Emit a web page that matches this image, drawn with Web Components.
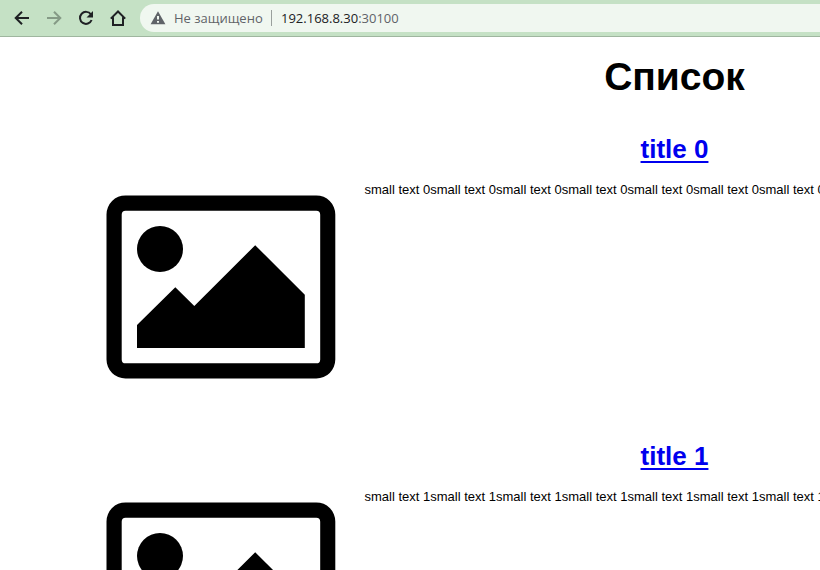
<!DOCTYPE html>
<html lang="ru">
<head>
<meta charset="utf-8">
<title>Список</title>
<style>
html, body { margin: 0; height: 570px; overflow: hidden; background: #fff; }
</style>
</head>
<body>
<app-window></app-window>
<script>
class BrowserBar extends HTMLElement {
  constructor() {
    super();
    this.attachShadow({ mode: 'open' }).innerHTML = `
<style>
:host { display: flex; box-sizing: border-box; height: 37px; flex: none; background: #c5e1c5; border-bottom: 1px solid #9fb69f; padding-top: 4px; align-items: flex-start; }
svg { display: block; flex: none; }
.nav { display: flex; padding-left: 14px; gap: 16px; width: 126px; height: 28px; align-items: center; box-sizing: content-box; }
.nav svg { width: 16px; height: 16px; fill: none; stroke: #1f2124; stroke-width: 2; }
.nav svg.off { stroke: #859a86; }
.url { display: flex; flex: 1; height: 28px; align-items: center; background: #f0f7f0; border-radius: 14px 0 0 14px; padding-left: 10px; box-sizing: border-box; font: 13px/28px "Open Sans", "Noto Sans", sans-serif; color: #5f6368; white-space: nowrap; }
.warn { margin-right: 8px; }
.state { width: 97px; }
.sep { width: 1px; height: 16px; background: #9aa09d; margin-right: 9px; }
b { font-weight: 400; color: #202124; }
</style>
<div class="nav">
  <svg viewBox="0 0 16 16"><path d="M15 8H2.4M8 1.7 1.7 8 8 14.3"/></svg>
  <svg class="off" viewBox="0 0 16 16"><path d="M1 8h12.6M8 1.7 14.3 8 8 14.3"/></svg>
  <svg viewBox="0 0 16 16"><path d="M12.9 4.4A6 6 0 1 0 13.6 10"/><path fill="#1f2124" stroke="none" d="M15 1v6.5H8.5z"/></svg>
  <svg viewBox="0 0 16 16"><path d="M.8 8.6 8 1.5l7.2 7.1M3 7.2V15h10V7.2"/></svg>
</div>
<div class="url">
  <svg class="warn" width="16" height="14" viewBox="0 0 16 14"><path fill="#5f6368" d="M8 .3 15.4 13.3H.6z"/><path fill="#f0f7f0" d="M7 5h2v3.6H7zM7 10h2v1.8H7z"/></svg>
  <span class="state">Не защищено</span><span class="sep"></span><span class="addr"><b>192.168.8.30</b>:30100</span>
</div>`;
  }
}
customElements.define('browser-bar', BrowserBar);

class PictureIcon extends HTMLElement {
  constructor() {
    super();
    this.attachShadow({ mode: 'open' }).innerHTML = `
<style>:host { display: block; width: 230px; height: 185px; } svg { display: block; }</style>
<svg width="230" height="185" viewBox="106 195 230 185">
  <path fill-rule="evenodd" d="M125.5 195.4H316.3A19 19 0 0 1 335.3 214.4V359.5A19 19 0 0 1 316.3 378.5H125.5A19 19 0 0 1 106.5 359.5V214.4A19 19 0 0 1 125.5 195.4ZM125.6 210.8A3.9 3.9 0 0 0 121.7 214.7V359.4A3.9 3.9 0 0 0 125.6 363.3H316.3A3.9 3.9 0 0 0 320.2 359.4V214.7A3.9 3.9 0 0 0 316.3 210.8Z"/>
  <circle cx="160" cy="249" r="23"/>
  <path d="M137 325 175.3 287.2 194.3 306 255.2 245.2 304.8 294.7V348H137Z"/>
</svg>`;
  }
}
customElements.define('picture-icon', PictureIcon);

class ListEntry extends HTMLElement {
  constructor() {
    super();
    this.attachShadow({ mode: 'open' }).innerHTML = `
<style>
:host { display: block; height: 307px; }
h2 { margin: 0; font-size: 26px; line-height: 30px; text-align: center; }
a { color: #0000ee; text-decoration: underline 2px; text-underline-offset: 3px; }
.row { display: flex; padding: 18px 0 0 106px; }
picture-icon { margin: 13px 28.5px 0 0; flex: none; }
p { margin: 0; line-height: 15px; white-space: nowrap; }
</style>
<h2><a href="#"><slot name="title"></slot></a></h2>
<div class="row"><picture-icon></picture-icon><p><slot></slot></p></div>`;
  }
}
customElements.define('list-entry', ListEntry);

class AppWindow extends HTMLElement {
  constructor() {
    super();
    const entries = [0, 1].map(n =>
      `<list-entry><span slot="title">title ${n}</span>${('small text ' + n).repeat(7)}</list-entry>`).join('');
    this.attachShadow({ mode: 'open' }).innerHTML = `
<style>
:host { display: flex; flex-direction: column; width: 820px; height: 570px; overflow: hidden; }
main { width: 1349px; font: 13px "Liberation Sans", Arial, sans-serif; color: #000; }
h1 { margin: 17px 0 35px; font-size: 39px; line-height: 45px; text-align: center; }
</style>
<browser-bar></browser-bar>
<main><h1>Список</h1>${entries}</main>`;
  }
}
customElements.define('app-window', AppWindow);
</script>
</body>
</html>
